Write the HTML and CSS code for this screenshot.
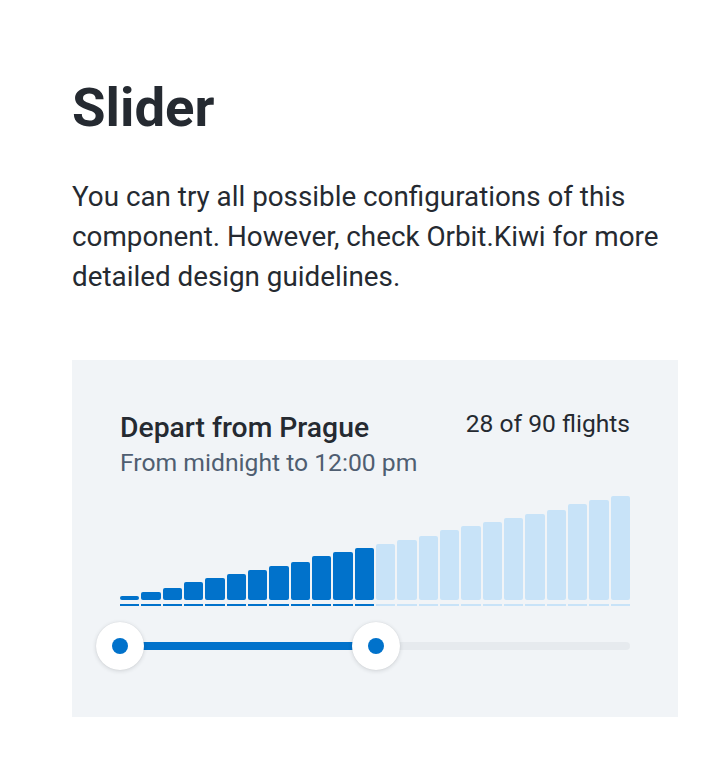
FILE: index.html
```html
<!DOCTYPE html>
<html lang="en">
<head>
<meta charset="utf-8">
<title>Slider</title>
<link rel="stylesheet" href="styles.css">
</head>
<body>
<main class="page">
  <h1 class="title">Slider</h1>
  <p class="lead">You can try all possible configurations of this component. However, check Orbit.Kiwi for more detailed design guidelines.</p>
  <section class="card">
    <div class="card-header">
      <div class="labels">
        <div class="label">Depart from Prague</div>
        <div class="sublabel">From midnight to 12:00 pm</div>
      </div>
      <div class="count">28 of 90 flights</div>
    </div>
    <div class="histogram">
      <div class="bar on" style="height:4px"></div>
      <div class="bar on" style="height:8px"></div>
      <div class="bar on" style="height:12px"></div>
      <div class="bar on" style="height:18px"></div>
      <div class="bar on" style="height:22px"></div>
      <div class="bar on" style="height:26px"></div>
      <div class="bar on" style="height:30px"></div>
      <div class="bar on" style="height:34px"></div>
      <div class="bar on" style="height:38px"></div>
      <div class="bar on" style="height:44px"></div>
      <div class="bar on" style="height:48px"></div>
      <div class="bar on" style="height:52px"></div>
      <div class="bar" style="height:56px"></div>
      <div class="bar" style="height:60px"></div>
      <div class="bar" style="height:64px"></div>
      <div class="bar" style="height:70px"></div>
      <div class="bar" style="height:74px"></div>
      <div class="bar" style="height:78px"></div>
      <div class="bar" style="height:82px"></div>
      <div class="bar" style="height:86px"></div>
      <div class="bar" style="height:90px"></div>
      <div class="bar" style="height:96px"></div>
      <div class="bar" style="height:100px"></div>
      <div class="bar" style="height:104px"></div>
    </div>
    <div class="dashes">
      <span class="dash on"></span><span class="dash on"></span><span class="dash on"></span><span class="dash on"></span>
      <span class="dash on"></span><span class="dash on"></span><span class="dash on"></span><span class="dash on"></span>
      <span class="dash on"></span><span class="dash on"></span><span class="dash on"></span><span class="dash on"></span>
      <span class="dash"></span><span class="dash"></span><span class="dash"></span><span class="dash"></span>
      <span class="dash"></span><span class="dash"></span><span class="dash"></span><span class="dash"></span>
      <span class="dash"></span><span class="dash"></span><span class="dash"></span><span class="dash"></span>
    </div>
    <div class="slider">
      <div class="track"><div class="range"></div></div>
      <div class="handle handle-start"><span class="dot"></span></div>
      <div class="handle handle-end"><span class="dot"></span></div>
    </div>
  </section>
</main>
</body>
</html>
```

FILE: styles.css
```css
* { box-sizing: border-box; }

html, body {
  margin: 0;
  padding: 0;
  background: #ffffff;
}

body {
  font-family: Roboto, "Liberation Sans", sans-serif;
  color: #252a31;
}

.page {
  padding: 75px 40px 40px 72px;
}

.title {
  margin: 0;
  font-size: 54.5px;
  line-height: 64px;
  font-weight: 700;
  color: #252a31;
}

.lead {
  margin: 38px 0 0;
  font-size: 27.8px;
  line-height: 40px;
  color: #252a31;
}

.card {
  margin-top: 63px;
  background: #f1f4f7;
  padding: 48px 48px 47px;
}

.card-header {
  display: flex;
  justify-content: space-between;
  align-items: flex-start;
}

.label {
  font-size: 28.3px;
  line-height: 40px;
  font-weight: 500;
  color: #252a31;
}

.sublabel {
  font-size: 24.7px;
  line-height: 30px;
  color: #4f5e71;
}

.count {
  font-size: 24.6px;
  line-height: 32px;
  color: #252a31;
}

.histogram {
  margin-top: 18px;
  height: 104px;
  display: flex;
  align-items: flex-end;
  gap: 2px;
}

.bar {
  flex: 1;
  border-radius: 2px;
  background: #c8e3f8;
}

.bar.on {
  background: #0172cb;
}

.dashes {
  margin-top: 4px;
  display: flex;
  gap: 2px;
}

.dash {
  flex: 1;
  height: 2px;
  background: #c8e3f8;
}

.dash.on {
  background: #0172cb;
}

.slider {
  position: relative;
  margin-top: 16px;
  height: 48px;
  display: flex;
  align-items: center;
}

.track {
  width: 100%;
  height: 8px;
  border-radius: 4px;
  background: #e6eaee;
}

.range {
  width: 256px;
  height: 8px;
  border-radius: 4px;
  background: #0172cb;
}

.handle {
  position: absolute;
  top: 0;
  width: 48px;
  height: 48px;
  border-radius: 50%;
  background: #ffffff;
  box-shadow: 0 1px 4px rgba(37, 42, 49, 0.16), 0 0 1px rgba(37, 42, 49, 0.12);
  display: flex;
  align-items: center;
  justify-content: center;
}

.handle-start { left: -24px; }
.handle-end { left: 232px; }

.dot {
  width: 16px;
  height: 16px;
  border-radius: 50%;
  background: #0172cb;
}
```
